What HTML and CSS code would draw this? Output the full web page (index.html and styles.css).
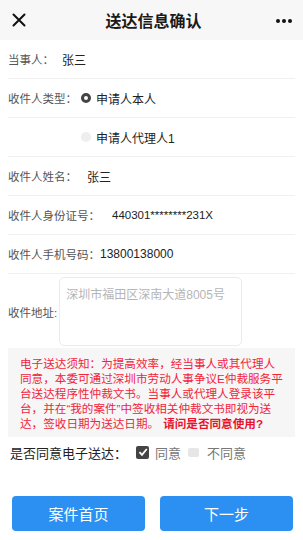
FILE: index.html
```html
<!DOCTYPE html>
<html lang="zh-CN">
<head>
    <meta charset="UTF-8">
    <meta name="viewport" content="width=device-width, initial-scale=1.0">
    <title>送达信息确认</title>
    <link rel="stylesheet" href="styles.css">
</head>
<body>
    <div class="header">
        <svg class="close-icon" width="14" height="14" viewBox="0 0 14 14">
            <path d="M1.5 1.5 L12.5 12.5 M12.5 1.5 L1.5 12.5" stroke="#111" stroke-width="2" stroke-linecap="round"/>
        </svg>
        <div class="title">送达信息确认</div>
        <svg class="more-icon" width="18" height="6" viewBox="0 0 18 6">
            <circle cx="3" cy="3" r="2" fill="#111"/>
            <circle cx="9" cy="3" r="2" fill="#111"/>
            <circle cx="15" cy="3" r="2" fill="#111"/>
        </svg>
    </div>

    <div class="form">
        <div class="row">
            <span class="label">当事人：</span>
            <span class="value v-party">张三</span>
        </div>
        <div class="row">
            <span class="label">收件人类型：</span>
            <label class="option">
                <span class="radio checked"></span>申请人本人
            </label>
        </div>
        <div class="row row-indent">
            <label class="option">
                <span class="radio"></span>申请人代理人1
            </label>
        </div>
        <div class="row">
            <span class="label">收件人姓名：</span>
            <span class="value v-name">张三</span>
        </div>
        <div class="row">
            <span class="label">收件人身份证号：</span>
            <span class="value v-id">440301********231X</span>
        </div>
        <div class="row">
            <span class="label">收件人手机号码：</span>
            <span class="value v-phone">13800138000</span>
        </div>
        <div class="address-row">
            <span class="label">收件地址:</span>
            <textarea class="address" placeholder="深圳市福田区深南大道8005号"></textarea>
        </div>

        <div class="notice"><span>电子送达须知：为提高效率，经当事人或其代理人同意，本委可通过深圳市劳动人事争议E仲裁服务平台送达程序性仲裁文书。当事人或代理人登录该平台，并在“我的案件”中签收相关仲裁文书即视为送</span><span>达，签收日期为送达日期。</span><b class="ask">请问是否同意使用?</b></div>

        <div class="agree-row">
            <span class="agree-label">是否同意电子送达：</span>
            <span class="checkbox checked">
                <svg width="10" height="10" viewBox="0 0 10 10"><path d="M1.5 5.2 L4 7.8 L8.8 2" stroke="#fff" stroke-width="1.8" fill="none"/></svg>
            </span>
            <span class="agree-text">同意</span>
            <span class="checkbox"></span>
            <span class="agree-text">不同意</span>
        </div>
    </div>

    <div class="buttons">
        <button class="btn">案件首页</button>
        <button class="btn">下一步</button>
    </div>
</body>
</html>
```

FILE: styles.css
```css
body {
    margin: 0;
    padding: 0;
    background-color: #fff;
    font-family: "Liberation Sans", "Noto Sans CJK SC", sans-serif;
    color: #333;
}
.header {
    height: 40px;
    background-color: #f7f7f7;
    display: flex;
    align-items: center;
    justify-content: space-between;
    padding: 0 10px 0 12px;
}
.title {
    font-size: 16px;
    font-weight: bold;
    color: #1a1a1a;
    margin-left: 6px;
}
.more-icon {
    margin-top: 2px;
}
.form {
    padding: 0 8px;
}
.row {
    height: 38px;
    display: flex;
    align-items: center;
    border-bottom: 1px solid #f0f0f0;
    font-size: 12px;
}
.label {
    color: #555;
    font-size: 11.5px;
}
.value {
    color: #222;
}
.v-party {
    margin-left: 8px;
}
.v-name {
    margin-left: 10px;
}
.v-id {
    margin-left: 12px;
    font-size: 11.5px;
}
.v-phone {
    margin-left: 0;
}
.row-indent {
    padding-left: 69px;
}
.option {
    display: flex;
    align-items: center;
    color: #222;
    margin-left: 4px;
}
.radio {
    width: 10px;
    height: 10px;
    border-radius: 50%;
    background-color: #eee;
    margin-right: 5px;
    box-sizing: border-box;
}
.radio.checked {
    border: 3px solid #444;
    background-color: #fff;
}
.address-row {
    display: flex;
    align-items: center;
    padding-top: 3px;
}
.address {
    width: 183px;
    height: 69px;
    margin-left: 2px;
    border: 1px solid #ebebeb;
    border-radius: 5px;
    padding: 7px 6px;
    box-sizing: border-box;
    font-family: inherit;
    font-size: 12px;
    resize: none;
}
.address::placeholder {
    color: #b5b5b5;
}
.notice {
    margin-top: 2px;
    background-color: #f6f6f6;
    padding: 8px 10px 6px 12px;
    color: #f2243c;
    font-size: 11.6px;
    line-height: 15px;
}
.notice .ask {
    color: #e8142e;
    margin-left: 4px;
}
.agree-row {
    display: flex;
    align-items: center;
    height: 30px;
    padding-left: 2px;
    font-size: 13px;
}
.agree-label {
    color: #222;
    margin-right: 9px;
}
.checkbox {
    width: 11px;
    height: 9px;
    background-color: #e6e6e6;
    border-radius: 2px;
    margin-right: 8px;
}
.checkbox.checked {
    width: 13px;
    height: 13px;
    background-color: #444;
    display: flex;
    align-items: center;
    justify-content: center;
    margin-right: 6px;
}
.agree-text {
    color: #777;
    margin-right: 7px;
}
.buttons {
    display: flex;
    gap: 15px;
    padding: 29px 10px 0 12px;
}
.btn {
    flex: 1;
    height: 35px;
    background-color: #2c8ff2;
    color: #fff;
    border: none;
    border-radius: 4px;
    font-family: inherit;
    font-size: 15px;
}
```
